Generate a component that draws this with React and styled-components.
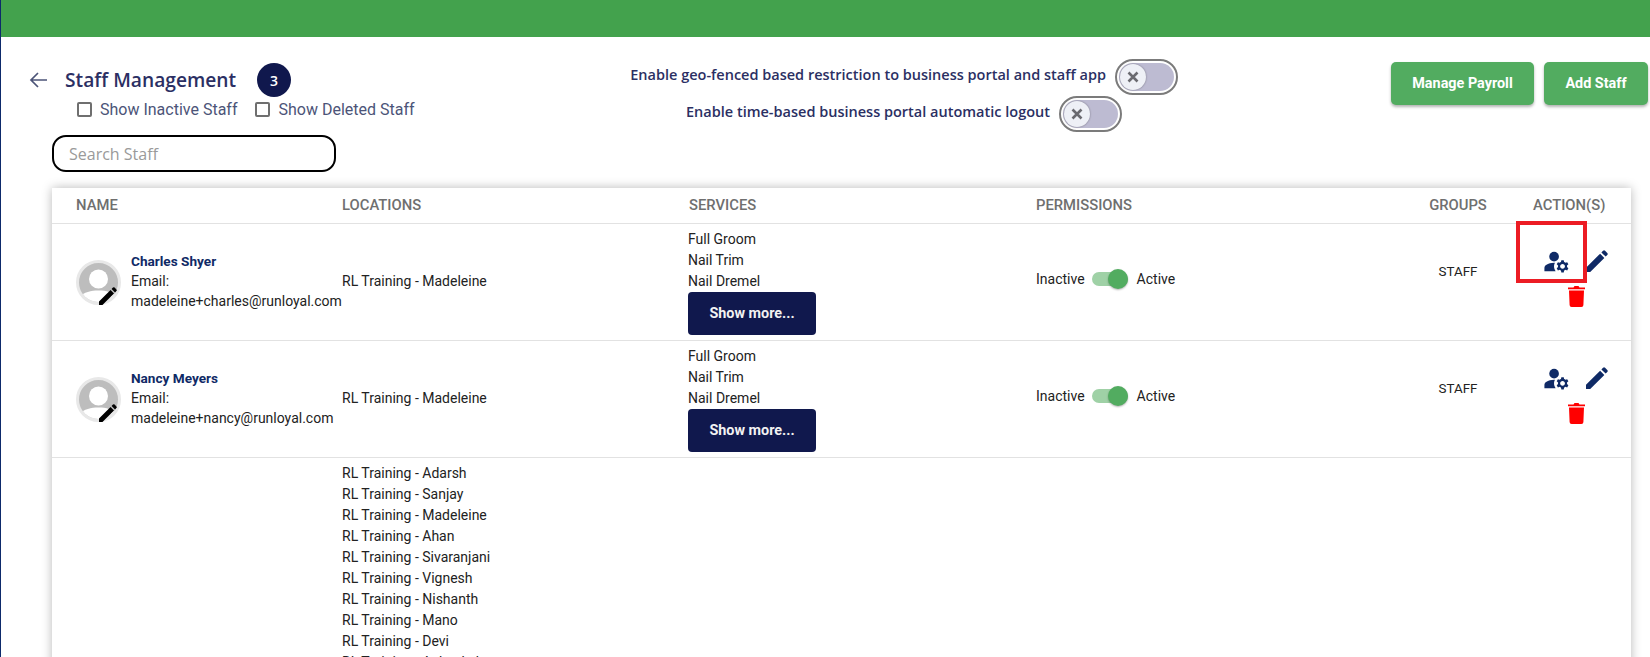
import React from "react";
import styled, { createGlobalStyle } from "styled-components";
import { MdManageAccounts } from "react-icons/md";

const Global = createGlobalStyle`
  html, body { margin: 0; padding: 0; background: #fff; height: 657px; overflow: hidden; }
  * { box-sizing: border-box; }
`;
const Page = styled.div`
  position: relative; width: 1650px; height: 657px; overflow: hidden; background: #fff;
  border-left: 1px solid #0d2a6b; font-family: Roboto, sans-serif;
`;
const TopBar = styled.div`height: 37px; background: #43a24d;`;
const Head = styled.div`
  display: grid; grid-template-columns: 560px 589px 1fr; height: 98px; padding-left: 28px;
`;
const TitleBlock = styled.div`display: flex; flex-direction: column;`;
const TitleRow = styled.div`display: flex; align-items: center; height: 40px; margin-top: 23px;`;
const Title = styled.h1`
  margin: -2px 0 0 18px; font: 600 19.2px "Open Sans", sans-serif; color: #2b2f63; white-space: nowrap;
`;
const Badge = styled.span`
  width: 34px; height: 34px; border-radius: 50%; background: #10184d; color: #fff; margin-left: 21px;
  display: flex; align-items: center; justify-content: center; font: 600 14px "Open Sans", sans-serif;
`;
const Checks = styled.div`display: flex; gap: 18px; padding-left: 48px; margin-top: -1px;`;
const Check = styled.label`
  display: flex; align-items: center; gap: 8px; font: 400 16px Roboto, sans-serif; color: #4c5478; height: 20px;
`;
const Box = styled.span`width: 15px; height: 15px; border: 2px solid #6f6f6f; border-radius: 2px;`;
const Notices = styled.div`
  display: flex; flex-direction: column; align-items: flex-end; padding-top: 21px;
`;
const Notice = styled.div`
  display: flex; align-items: center; gap: 9px; height: 37px; padding-right: ${p => p.$pad}px;
  font: 600 14.5px "Open Sans", sans-serif; color: #2b2f63; white-space: nowrap;
`;
const NoticeText = styled.span`margin-top: -5px;`;
const Toggle = styled.span`
  position: relative; width: 63px; height: 36px; border-radius: 18px; border: 2px solid #7b7b7b;
  background: #fff; padding: 2px; display: block; flex: none;
`;
const Track = styled.span`display: block; width: 100%; height: 100%; border-radius: 14px; background: #bdbbd2;`;
const Knob = styled.span`
  position: absolute; left: 3px; top: 3px; width: 26px; height: 26px; border-radius: 50%; background: #eef0f6;
  box-shadow: 0 0 2px rgba(0,0,0,.4); display: flex; align-items: center; justify-content: center;
`;
const Buttons = styled.div`display: flex; gap: 10px; justify-content: flex-end; padding: 25px 2px 0 0;`;
const GreenButton = styled.button`
  height: 43px; width: ${p => p.$w}px; border: 0; border-radius: 5px; background: #52ac60; color: #fff;
  font: 700 14.4px Roboto, sans-serif; box-shadow: 0 2px 3px rgba(0,0,0,.3); padding: 0;
`;
const SearchWrap = styled.div`padding-left: 51px; height: 53px;`;
const Search = styled.div`
  width: 284px; height: 37px; border: 2px solid #000; border-radius: 14px; padding: 0 15px;
  display: flex; align-items: center; font: 400 16px "Open Sans", sans-serif; color: #9a9a9a;
`;
const Card = styled.div`
  margin-left: 51px; width: 1579px; background: #fff; box-shadow: 0 0 10px rgba(0,0,0,.28); height: 480px;
`;
const Row = styled.div`
  display: grid; grid-template-columns: 290px 347px 347px 364px 116px 115px; height: ${p => p.$h}px;
  border-bottom: ${p => (p.$last ? "0" : "1px solid #e2e2e2")};
`;
const HeadCell = styled.div`
  font: 500 14.8px Roboto, sans-serif; color: #6f6f6f; display: flex; align-items: center;
  justify-content: ${p => (p.$center ? "center" : "flex-start")}; padding: 0 0 2px ${p => p.$pad || 0}px;
`;
const NameCell = styled.div`display: flex; align-items: center; padding-left: 24px; gap: 10px; position: relative;`;
const Avatar = styled.span`
  position: relative; width: 45px; height: 45px; border-radius: 50%; background: #bdbdbd;
  border: 3px solid #e8e8e8; flex: none;
`;
const AvatarArt = styled.svg`display: block; border-radius: 50%;`;
const AvatarPencil = styled.span`position: absolute; right: 1px; bottom: -3px; display: flex;`;
const Person = styled.div`
  font: 400 14px/20px Roboto, sans-serif; color: #222; white-space: nowrap; margin-top: -1px;
`;
const PersonName = styled.div`font-weight: 700; font-size: 13.6px; line-height: 19px; color: #0f2a66;`;
const TextCell = styled.div`
  font: 400 14px/20px Roboto, sans-serif; color: #222; display: flex; align-items: center;
`;
const LocationCell = styled(TextCell)`padding-bottom: 2px;`;
const Services = styled.div`
  font: 400 14px/21px Roboto, sans-serif; color: #222; padding-top: 5px; margin-left: -1px;
`;
const ShowMore = styled.button`
  display: block; width: 128px; height: 43px; background: #10184d; color: #f2f2f2; border: 0; border-radius: 4px;
  font: 700 14.4px Roboto, sans-serif; padding: 0;
`;
const Permission = styled.div`
  display: flex; align-items: center; font: 400 14px Roboto, sans-serif; color: #222; margin-top: -6px;
`;
const MiniSwitch = styled.span`
  position: relative; display: block; width: 36px; height: 14px; border-radius: 7px; background: #9fd1a6;
  margin: 0 9px 0 7px;
`;
const MiniKnob = styled.span`
  position: absolute; right: 0; top: -3px; width: 20px; height: 20px; border-radius: 50%; background: #52ac60;
  box-shadow: 0 1px 2px rgba(0,0,0,.3);
`;
const GroupCell = styled.div`
  font: 400 13.4px Roboto, sans-serif; color: #222; display: flex; align-items: center; justify-content: center;
  margin-top: -22px;
`;
const Actions = styled.div`
  display: grid; grid-template-columns: 44px 23px; grid-auto-rows: min-content; justify-content: start;
  padding: 22px 0 0 26px; row-gap: 8px;
`;
const IconBtn = styled.span`display: flex; align-items: center; justify-content: flex-start; height: 30px; color: #0f2a66;`;
const Trash = styled(IconBtn)`grid-column: 1 / span 2; padding-left: 26px; height: 23px;`;
const LocationList = styled.div`
  font: 400 14px/21px Roboto, sans-serif; color: #222; padding-top: 5px;
`;
const Highlight = styled.div`
  position: absolute; left: 1515px; top: 221px; width: 71px; height: 62px; border: 4px solid #ec1c24; pointer-events: none;
`;

const X = () => (
  <svg width="14" height="14" viewBox="0 0 14 14"><path d="M2.500 2.500l9 9M11.500 2.500l-9 9" stroke="#6a6a70" strokeWidth="2.600"/></svg>
);
const Switch = () => <Toggle><Track /><Knob><X /></Knob></Toggle>;
const PencilIcon = ({ size = 22, color = "#0f2a66" }) => (
  <svg width={size} height={size} viewBox="0 0 24 24" fill={color}>
    <path d="M0 24v-4.600L15.400 4l4.600 4.600L4.600 24zM16.800 2.600 18.600.8a1.600 1.600 0 0 1 2.200 0l2.400 2.400a1.600 1.600 0 0 1 0 2.200l-1.800 1.800z"/>
  </svg>
);
const TrashIcon = () => (
  <svg width="17" height="22" viewBox="0 0 17 22" fill="#f00">
    <path d="M0 2.500h5.500L6.500 1h4l1 1.500H17v1.700H0z"/>
    <path d="M1 5.500h15l-.6 14.500a2 2 0 0 1-2 2H3.600a2 2 0 0 1-2-2z"/>
  </svg>
);

const staff = [
  { name: "Charles Shyer", email: "madeleine+charles@runloyal.com" },
  { name: "Nancy Meyers", email: "madeleine+nancy@runloyal.com" },
];
const locations = ["Adarsh","Sanjay","Madeleine","Ahan","Sivaranjani","Vignesh","Nishanth","Mano","Devi","Aakanksha"];

export default function App() {
  return (
    <Page>
      <Global />
      <TopBar />
      <Head>
        <TitleBlock>
          <TitleRow>
            <svg width="18" height="18" viewBox="0 0 18 18" fill="none" stroke="#4c5478" strokeWidth="1.700"><path d="M18 9H2M9 2 2 9l7 7"/></svg>
            <Title>Staff Management</Title>
            <Badge>3</Badge>
          </TitleRow>
          <Checks>
            <Check><Box />Show Inactive Staff</Check>
            <Check><Box />Show Deleted Staff</Check>
          </Checks>
        </TitleBlock>
        <Notices>
          <Notice $pad={0}><NoticeText>Enable geo-fenced based restriction to business portal and staff app</NoticeText> <Switch /></Notice>
          <Notice $pad={56}><NoticeText>Enable time-based business portal automatic logout</NoticeText> <Switch /></Notice>
        </Notices>
        <Buttons>
          <GreenButton $w={143}>Manage Payroll</GreenButton>
          <GreenButton $w={104}>Add Staff</GreenButton>
        </Buttons>
      </Head>
      <SearchWrap><Search>Search Staff</Search></SearchWrap>
      <Card>
        <Row $h={36}>
          <HeadCell $pad={24}>NAME</HeadCell>
          <HeadCell>LOCATIONS</HeadCell>
          <HeadCell>SERVICES</HeadCell>
          <HeadCell>PERMISSIONS</HeadCell>
          <HeadCell $center>GROUPS</HeadCell>
          <HeadCell $pad={17}>ACTION(S)</HeadCell>
        </Row>
        {staff.map(s => (
          <Row $h={117} key={s.name}>
            <NameCell>
              <Avatar>
                <AvatarArt width="39" height="39" viewBox="0 0 39 39">
                  <circle cx="19.500" cy="16" r="9.500" fill="#fff"/>
                  <path d="M0 34c5-5 12-6.500 19.500-6.500S34 29 39 34v5H0z" fill="#fff"/>
                </AvatarArt>
                <AvatarPencil><PencilIcon size={18} color="#000" /></AvatarPencil>
              </Avatar>
              <Person>
                <PersonName>{s.name}</PersonName>
                Email:<br />{s.email}
              </Person>
            </NameCell>
            <LocationCell>RL Training - Madeleine</LocationCell>
            <Services>
              <div>Full Groom</div><div>Nail Trim</div><div>Nail Dremel</div>
              <ShowMore>Show more...</ShowMore>
            </Services>
            <TextCell>
              <Permission>Inactive<MiniSwitch><MiniKnob /></MiniSwitch>Active</Permission>
            </TextCell>
            <GroupCell>STAFF</GroupCell>
            <Actions>
              <IconBtn><MdManageAccounts size={29} /></IconBtn>
              <IconBtn><PencilIcon /></IconBtn>
              <Trash><TrashIcon /></Trash>
            </Actions>
          </Row>
        ))}
        <Row $h={260} $last>
          <div />
          <LocationList>
            {locations.map(l => <div key={l}>RL Training - {l}</div>)}
          </LocationList>
        </Row>
      </Card>
      <Highlight />
    </Page>
  );
}
